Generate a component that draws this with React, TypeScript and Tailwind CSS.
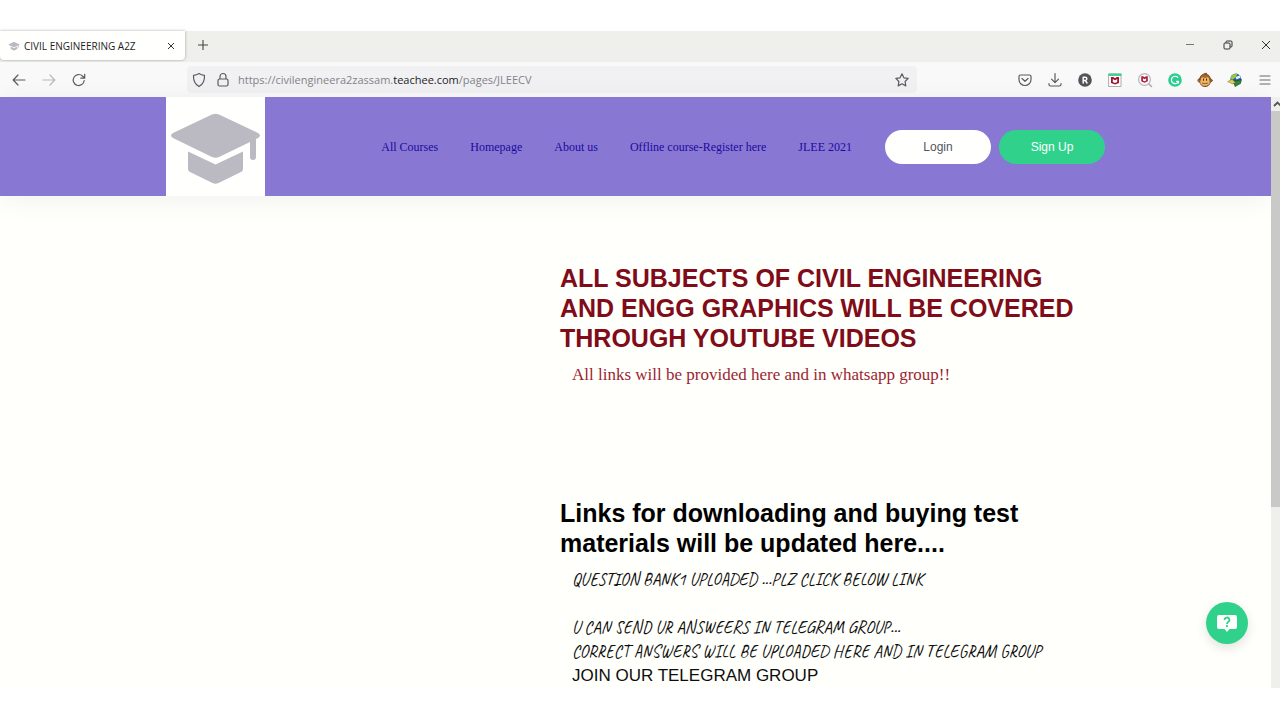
import React from "react";

const navLinks = ["All Courses", "Homepage", "About us", "Offline course-Register here", "JLEE 2021"];

function CapIcon({ className }: { className: string }) {
  return (
    <svg viewBox="0 0 99 99" className={className} fill="#bbb9c1" aria-hidden="true">
      <path d="M46 17.5q3.500-1.500 7 0L92 36q4 2.500 0 5l-2 1v18q0 3-3 3t-3-3V45L53 60q-3.500 1.500-7 0L7 41q-4-2.500 0-5z" />
      <path d="M22 54.500 49.500 67.500 77 54.500V72q0 2-2 3L52.500 86q-3 1.300-6 0L24 75q-2-1-2-3z" />
    </svg>
  );
}

interface ToolButtonProps {
  label: string;
  children: React.ReactNode;
}

function ToolButton({ label, children }: ToolButtonProps) {
  return (
    <button type="button" aria-label={label} className="flex h-7 w-[30px] shrink-0 items-center justify-center">
      <svg
        viewBox="0 0 16 16"
        className="h-4 w-4"
        fill="none"
        stroke="#5b5b60"
        strokeWidth="1.200"
        strokeLinecap="round"
        strokeLinejoin="round"
      >
        {children}
      </svg>
    </button>
  );
}

function TabStrip() {
  return (
    <div className="flex h-[31px] items-center bg-[#efefeb] pb-1">
      <div className="flex h-[29px] w-[185px] items-center self-start rounded-b bg-[#fffffd] pl-2 pr-2 shadow-[0_0_3px_rgba(0,0,0,0.35)]">
        <CapIcon className="h-3 w-3" />
        <span className="ml-1 flex-1 text-[10px] leading-4 text-[#1d1d1f]">CIVIL ENGINEERING A2Z</span>
        <button type="button" aria-label="Close tab" className="flex h-3 w-3 items-center justify-center">
          <svg viewBox="0 0 8 8" className="h-2 w-2" stroke="#333" strokeWidth="1">
            <path d="M1 1l6 6M7 1L1 7" />
          </svg>
        </button>
      </div>
      <button type="button" aria-label="New tab" className="ml-3 flex h-3 w-3 items-center justify-center">
        <svg viewBox="0 0 12 12" className="h-3 w-3" stroke="#444" strokeWidth="1.100">
          <path d="M6 1v10M1 6h10" />
        </svg>
      </button>
      <div className="ml-auto flex items-center gap-[10px]">
        <button type="button" aria-label="Minimize" className="flex h-6 w-7 items-center justify-center">
          <svg viewBox="0 0 10 10" className="h-[10px] w-[10px]" stroke="#777" strokeWidth="1">
            <path d="M1 4.500h8" />
          </svg>
        </button>
        <button type="button" aria-label="Restore" className="flex h-6 w-7 items-center justify-center">
          <svg viewBox="0 0 10 10" className="h-[10px] w-[10px]" fill="none" stroke="#333" strokeWidth="1">
            <rect x="1" y="3" width="6" height="6" rx="1" />
            <path d="M3 2.800V2q0-1 1-1h4q1 0 1 1v4q0 1-1 1h-.8" />
          </svg>
        </button>
        <button type="button" aria-label="Close" className="flex h-6 w-7 items-center justify-center">
          <svg viewBox="0 0 10 10" className="h-[10px] w-[10px]" stroke="#333" strokeWidth="1">
            <path d="M1 1l8 8M9 1L1 9" />
          </svg>
        </button>
      </div>
    </div>
  );
}

function Toolbar() {
  return (
    <div className="flex h-[35px] items-center bg-[#f9f9fa] pl-1">
      <ToolButton label="Back">
        <path d="M14 8H2.500M7 3 2.200 8 7 13" />
      </ToolButton>
      <ToolButton label="Forward">
        <path stroke="#b9b9bc" d="M2 8h11.500M9 3l4.800 5L9 13" />
      </ToolButton>
      <ToolButton label="Reload">
        <path d="M13.200 8.500A5.500 5.500 0 1 1 11.500 4l2 2M13.700 2.300V6.200H9.800" />
      </ToolButton>

      <div className="mx-[93px] flex h-[27px] min-w-0 flex-1 items-center rounded bg-[#f1f1f4]">
        <svg viewBox="0 0 16 16" className="mx-1 h-4 w-4 shrink-0" fill="none" stroke="#5b5b60" strokeWidth="1.200" strokeLinejoin="round">
          <path d="M8 1.600c1.500 1 3.500 1.600 5.500 1.700.3 5-1.500 9-5.500 11.300C4 12.300 2.200 8.300 2.500 3.300 4.500 3.200 6.500 2.600 8 1.600z" />
        </svg>
        <svg viewBox="0 0 16 16" className="mx-1 h-4 w-4 shrink-0" fill="none" stroke="#5b5b60" strokeWidth="1.200">
          <rect x="3" y="7" width="10" height="7" rx="1.500" />
          <path d="M5 7V4.500a3 3 0 0 1 6 0V7" />
        </svg>
        <a href="#page" className="flex-1 whitespace-nowrap pl-[3px] text-[11px] leading-4 text-[#838387]">
          https://civilengineera2zassam.<span className="text-[#1d1d1f]">teachee.com</span>/pages/JLEECV
        </a>
        <ToolButton label="Bookmark this page">
          <path d="M8 1.800l1.900 4 4.300.6-3.100 3.100.7 4.400L8 11.800l-3.800 2.100.7-4.400L1.800 6.400l4.300-.6z" />
        </ToolButton>
      </div>

      <ToolButton label="Save to Pocket">
        <path d="M3.500 3h9q1.500 0 1.500 1.500V7.500a6 6 0 0 1-12 0V4.500Q2 3 3.500 3zM5 6.500 8 9.300l3-2.800" />
      </ToolButton>
      <ToolButton label="Downloads">
        <path d="M8 1.500v9M4.500 7.200 8 10.700l3.500-3.500M2 11.500v1q0 1.500 1.500 1.500h9q1.500 0 1.500-1.500v-1" />
      </ToolButton>
      <ToolButton label="Reader extension">
        <circle cx="8" cy="8" r="6.800" fill="#54545a" stroke="none" />
        <path stroke="#fff" strokeWidth="1.500" d="M6.200 11V5.200h2a1.600 1.600 0 0 1 0 3.300h-2M8.300 8.500 10 11" />
      </ToolButton>
      <ToolButton label="Web protection">
        <path fill="#fff" stroke="#a9b0ae" strokeWidth="1" d="M2 2h12v12.500H2z" />
        <path fill="#41cf94" stroke="none" d="M1.500 1.500h13V4h-13z" />
        <path fill="#a5112d" stroke="none" d="M4 5h2.200L8 6.200 9.800 5H12v6l-4 1.500L4 11z" />
        <path fill="#fff" stroke="none" d="M5.800 7 8 8.300 10.200 7v2.900L8 10.900l-2.200-1z" />
      </ToolButton>
      <ToolButton label="Secure search">
        <circle cx="7.500" cy="7.500" r="5.900" fill="#fafafa" stroke="#b5b5b9" strokeWidth="1.200" />
        <path stroke="#a9a9ad" strokeWidth="1.500" d="m12 12 2.500 2.500" />
        <path fill="#b01c3c" stroke="none" d="M4.200 4.300h1.900l1.400.9 1.400-.9h1.900v5l-3.300 1.500-3.300-1.500z" />
        <path fill="#fff" stroke="none" d="m5.900 6.200 1.600 1 1.600-1v2.300l-1.600.7-1.600-.7z" />
      </ToolButton>
      <ToolButton label="Grammar check">
        <circle cx="8" cy="8" r="6.800" fill="#2bcf91" stroke="none" />
        <path stroke="#fff" strokeWidth="1.200" d="M10.700 5.300A3.700 3.700 0 1 0 11.500 9.500M9.500 9.300h2V11" />
      </ToolButton>
      <ToolButton label="Monkey extension">
        <circle cx="2.500" cy="8.500" r="1.700" fill="#d08a40" stroke="#61391b" strokeWidth=".7" />
        <circle cx="13.500" cy="8.500" r="1.700" fill="#d08a40" stroke="#61391b" strokeWidth=".7" />
        <path fill="#a86327" stroke="#61391b" strokeWidth=".8" d="M2.800 7C3 3.500 5.500 2 9.500 1.200L8.800 2.500C12 2.200 13.500 5 13.300 8.500c0 4-2 6-5.300 6S2.500 12.500 2.800 7z" />
        <path fill="#efb768" stroke="none" d="M3.800 8c-.3-3 2.700-3.300 4.200-1.800C9.500 4.700 12.500 5 12.200 8c1.500 3-.3 5.800-4.200 5.800S2.300 11 3.800 8z" />
        <path stroke="#3c2412" strokeWidth="1" d="M6.500 7v1.300M9.500 7v1.300" />
        <path stroke="#7a4a20" strokeWidth=".8" d="M5.200 11.200q2.800 1.200 5.600 0" />
      </ToolButton>
      <ToolButton label="Download manager">
        <circle cx="8.800" cy="7" r="5.400" fill="#2559b0" stroke="none" />
        <path fill="#9cc93a" stroke="none" d="M3.600 5.500C5 2.200 8 1.100 10.500 1.900L8.500 5.500 5 8z" />
        <path fill="#e2f1f6" stroke="none" d="M8.500 5l4.500-1.700.6 2.500-4.100 1.700z" />
        <path fill="#2f8a36" stroke="#173f1c" strokeWidth=".6" d="M7 9.500l7.500-2-1 4L8 14.500l-.5-2z" />
        <path fill="#e4cf45" stroke="#6f6a1c" strokeWidth=".5" d="M1 9.500l4-2.200 3.500 3.200-2.300 1.300z" />
      </ToolButton>
      <ToolButton label="Menu">
        <path stroke="#6a6a6e" d="M3 4h10M3 8h10M3 12h10" />
      </ToolButton>
    </div>
  );
}

function SiteHeader() {
  return (
    <header className="bg-[#8878d4] shadow-[0_4px_28px_rgba(0,0,0,0.06)]">
      <div className="mx-auto flex max-w-[939px] items-center justify-between">
        <a href="#home" aria-label="Home" className="bg-[#fffffd]">
          <CapIcon className="h-[99px] w-[99px]" />
        </a>
        <div className="flex items-center gap-[33px]">
          <nav className="flex gap-8 font-['Liberation_Serif',serif] text-xs text-[#1c0a9c]">
            {navLinks.map((link) => (
              <a key={link} href="#page" className="whitespace-nowrap">
                {link}
              </a>
            ))}
          </nav>
          <div className="flex gap-2 font-['Liberation_Sans',sans-serif] text-xs">
            <button type="button" className="h-[34px] w-[106px] rounded-full bg-[#fffffd] text-[#55555f]">
              Login
            </button>
            <button type="button" className="h-[34px] w-[106px] rounded-full bg-[#30d28b] text-white">
              Sign Up
            </button>
          </div>
        </div>
      </div>
    </header>
  );
}

function PageContent() {
  return (
    <main className="mx-auto max-w-[939px] pt-[67px] font-['Liberation_Sans',sans-serif]">
      <div className="ml-auto w-[545px] pr-5">
        <section>
          <h1 className="text-[25px] font-bold leading-[30px] text-[#800b19]">
            ALL SUBJECTS OF CIVIL ENGINEERING AND ENGG GRAPHICS WILL BE COVERED THROUGH YOUTUBE VIDEOS
          </h1>
          <p className="mt-[10px] pl-3 font-['Liberation_Serif',serif] text-[17px] leading-6 text-[#9c1f33]">
            All links will be provided here and in whatsapp group!!
          </p>
        </section>
        <section className="mt-[111px]">
          <h2 className="text-[25px] font-bold leading-[30px] text-black">
            Links for downloading and buying test materials will be updated here....
          </h2>
          <div className="mt-[10px] pl-3 text-[17px] leading-6 text-[#0d0d0d]">
            <div className="whitespace-nowrap font-['Caveat','Liberation_Sans_Narrow',cursive]">
              <p className="mb-6">QUESTION BANK1 UPLOADED ...PLZ CLICK BELOW LINK</p>
              <p>U CAN SEND UR ANSWEERS IN TELEGRAM GROUP...</p>
              <p>CORRECT ANSWERS WILL BE UPLOADED HERE AND IN TELEGRAM GROUP</p>
            </div>
            <p>JOIN OUR TELEGRAM GROUP</p>
          </div>
        </section>
      </div>
    </main>
  );
}

function ScrollTrack() {
  return (
    <div className="flex w-[9px] shrink-0 flex-col overflow-hidden bg-[#efefec]">
      <svg viewBox="0 0 9 14" className="h-[14px] w-[9px] shrink-0" fill="none" stroke="#555" strokeWidth="1.800">
        <path d="M3 9l3.500-3.500L10 9" />
      </svg>
      <div className="h-[67%] bg-[#c9c9c7]" />
    </div>
  );
}

export default function App() {
  return (
    <div className="flex min-h-screen flex-col bg-white pt-[31px] pb-8 font-['Open_Sans','Noto_Sans',sans-serif]">
      <TabStrip />
      <Toolbar />
      <div className="relative flex flex-1">
        <div className="min-w-0 flex-1 bg-[#fffffb]">
          <SiteHeader />
          <PageContent />
        </div>
        <ScrollTrack />
        <button
          type="button"
          aria-label="Help"
          className="absolute right-8 bottom-11 flex h-[42px] w-[42px] items-center justify-center rounded-full bg-[#30d28b] shadow-[0_4px_12px_rgba(0,0,0,0.12)]"
        >
          <svg viewBox="0 0 20 20" className="h-5 w-5">
            <path fill="#fffffd" d="M2 2h16q2 0 2 2v10q0 2-2 2h-5.500L10 19l-2.500-3H2q-2 0-2-2V4q0-2 2-2z" />
            <path fill="none" stroke="#30d28b" strokeWidth="1.800" d="M7.600 7a2.400 2.400 0 1 1 3.600 2q-1.200.7-1.200 2" />
            <circle cx="10" cy="13.200" r="1.100" fill="#30d28b" />
          </svg>
        </button>
      </div>
    </div>
  );
}
